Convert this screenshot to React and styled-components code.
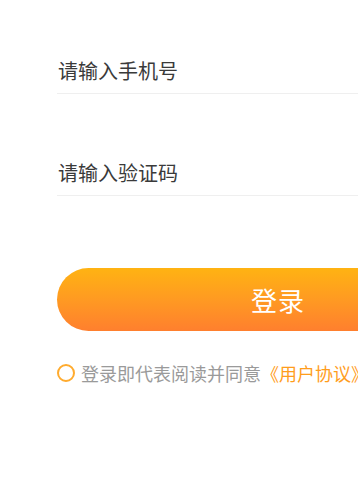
import React, { useState } from "react";
import styled, { createGlobalStyle } from "styled-components";

const GlobalStyle = createGlobalStyle`
  html, body {
    margin: 0;
    padding: 0;
    background: #fff;
    overflow: hidden;
  }
  body {
    font-family: "Noto Sans CJK SC", "Noto Sans", sans-serif;
  }
`;

const App = () => {
  const [agreed, setAgreed] = useState(false);

  return (
    <Page>
      <GlobalStyle />
      <Form>
        <Field placeholder="请输入手机号" />
        <Field placeholder="请输入验证码" $gap={58} />
      </Form>

      <LoginButton>登录</LoginButton>

      <Agreement onClick={() => setAgreed(!agreed)}>
        <Radio $checked={agreed} />
        <span>登录即代表阅读并同意</span>
        <Link>《用户协议》</Link>
      </Agreement>
    </Page>
  );
};

export default App;

const Page = styled.div`
  width: 556px;
  box-sizing: border-box;
  padding: 50px 57px 0;
  display: flex;
  flex-direction: column;
`;

const Form = styled.div`
  display: flex;
  flex-direction: column;
`;

const Field = styled.input`
  box-sizing: border-box;
  height: 44px;
  margin-top: ${(props) => props.$gap || 0}px;
  padding: 0 0 3px 1px;
  border: none;
  border-bottom: 1px solid #efefef;
  outline: none;
  font-family: inherit;
  font-size: 20px;
  color: #3a3a3a;
  background: transparent;

  &::placeholder {
    color: #3a3a3a;
  }
`;

const LoginButton = styled.button`
  margin-top: 72px;
  height: 63px;
  width: 442px;
  border: none;
  border-radius: 32px;
  background: linear-gradient(180deg, #ffb312 0%, #ff9a22 50%, #ff7f2e 100%);
  color: #fff;
  font-family: inherit;
  font-size: 26px;
  letter-spacing: 1px;
  cursor: pointer;
`;

const Agreement = styled.div`
  margin-top: 31px;
  display: flex;
  align-items: center;
  font-size: 18px;
  color: #9a9a9a;
  white-space: nowrap;
  line-height: 22px;
`;

const Radio = styled.span`
  width: 14px;
  height: 14px;
  border-radius: 50%;
  border: 2px solid #ffab2e;
  background: ${(props) => (props.$checked ? "#ffab2e" : "transparent")};
  margin-right: 6px;
  flex-shrink: 0;
`;

const Link = styled.span`
  color: #ff9d1c;
`;
